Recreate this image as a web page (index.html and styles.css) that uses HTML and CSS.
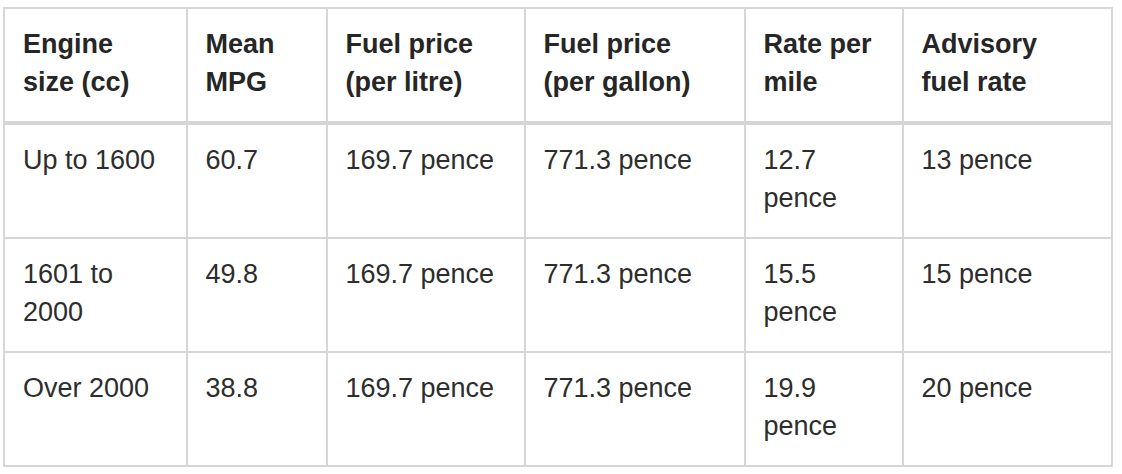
FILE: index.html
```html
<!DOCTYPE html>
<html>
<head>
<meta charset="utf-8">
<link rel="stylesheet" href="styles.css">
</head>
<body>
<table class="rates">
  <colgroup>
    <col class="c1"><col class="c2"><col class="c3"><col class="c4"><col class="c5"><col class="c6">
  </colgroup>
  <thead>
    <tr>
      <th>Engine size (cc)</th>
      <th>Mean MPG</th>
      <th>Fuel price (per litre)</th>
      <th>Fuel price (per gallon)</th>
      <th>Rate per mile</th>
      <th>Advisory fuel rate</th>
    </tr>
  </thead>
  <tbody>
    <tr>
      <td>Up to 1600</td>
      <td>60.7</td>
      <td>169.7 pence</td>
      <td>771.3 pence</td>
      <td>12.7 pence</td>
      <td>13 pence</td>
    </tr>
    <tr>
      <td>1601 to 2000</td>
      <td>49.8</td>
      <td>169.7 pence</td>
      <td>771.3 pence</td>
      <td>15.5 pence</td>
      <td>15 pence</td>
    </tr>
    <tr>
      <td>Over 2000</td>
      <td>38.8</td>
      <td>169.7 pence</td>
      <td>771.3 pence</td>
      <td>19.9 pence</td>
      <td>20 pence</td>
    </tr>
  </tbody>
</table>
</body>
</html>
```

FILE: styles.css
```css
html, body {
  margin: 0;
  padding: 0;
  background: #ffffff;
}
body {
  font-family: "Liberation Sans", Arial, sans-serif;
  font-size: 27px;
  line-height: 38px;
  color: #2d2d2d;
}
.rates {
  margin: 7px 0 0 3px;
  border-collapse: collapse;
  table-layout: fixed;
  width: 1110px;
}
.c1 { width: 182.5px; }
.c2 { width: 140px; }
.c3 { width: 198px; }
.c4 { width: 220px; }
.c5 { width: 158px; }
.c6 { width: 209.5px; }
.rates th,
.rates td {
  border: 2px solid #d6d6d6;
  padding: 16px 20px 20px 18px;
  text-align: left;
  vertical-align: top;
}
.rates th {
  font-weight: bold;
  color: #262626;
  border-bottom-width: 4px;
}
```
